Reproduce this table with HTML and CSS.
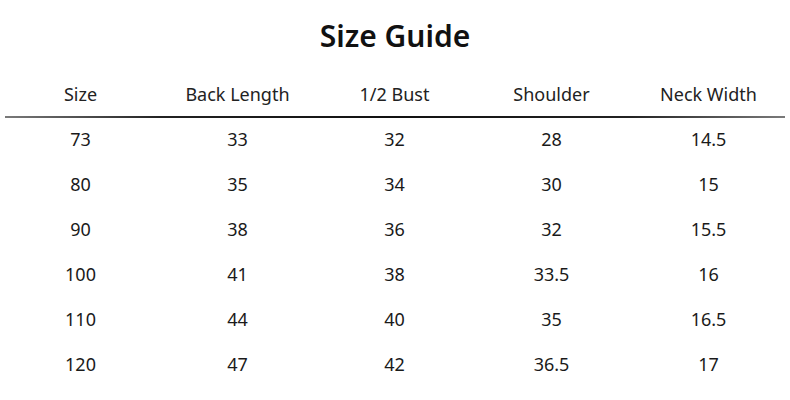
FILE: index.html
```html
<!DOCTYPE html>
<html>
<head>
<meta charset="utf-8">
<link rel="stylesheet" href="styles.css">
</head>
<body>
<div class="page">
  <h1 class="title">Size Guide</h1>
  <div class="row head">
    <div>Size</div><div>Back Length</div><div>1/2 Bust</div><div>Shoulder</div><div>Neck Width</div>
  </div>
  <div class="rule"></div>
  <div class="row"><div>73</div><div>33</div><div>32</div><div>28</div><div>14.5</div></div>
  <div class="row"><div>80</div><div>35</div><div>34</div><div>30</div><div>15</div></div>
  <div class="row"><div>90</div><div>38</div><div>36</div><div>32</div><div>15.5</div></div>
  <div class="row"><div>100</div><div>41</div><div>38</div><div>33.5</div><div>16</div></div>
  <div class="row"><div>110</div><div>44</div><div>40</div><div>35</div><div>16.5</div></div>
  <div class="row"><div>120</div><div>47</div><div>42</div><div>36.5</div><div>17</div></div>
</div>
</body>
</html>
```
FILE: styles.css
```css
html, body {
  margin: 0;
  padding: 0;
  background: #fff;
}
.page {
  width: 790px;
  height: 400px;
  font-family: "Noto Sans", "Open Sans", sans-serif;
  color: #1a1a1a;
  padding-top: 16px;
  box-sizing: border-box;
}
.title {
  margin: 0 0 16px 0;
  text-align: center;
  font-size: 30px;
  line-height: 40px;
  font-weight: 600;
  color: #111;
  padding-left: 0;
}
.row {
  display: grid;
  grid-template-columns: repeat(5, 157px);
  padding-left: 2px;
  font-size: 18px;
  text-align: center;
  height: 45px;
  line-height: 42px;
}
.row.head {
  height: 44px;
  line-height: 44px;
  color: #222;
}
.rule {
  margin: 0 5px;
  height: 2px;
  background: linear-gradient(to right, #7a7a7a, #222 20%, #111 50%, #222 80%, #7a7a7a);
}
```
